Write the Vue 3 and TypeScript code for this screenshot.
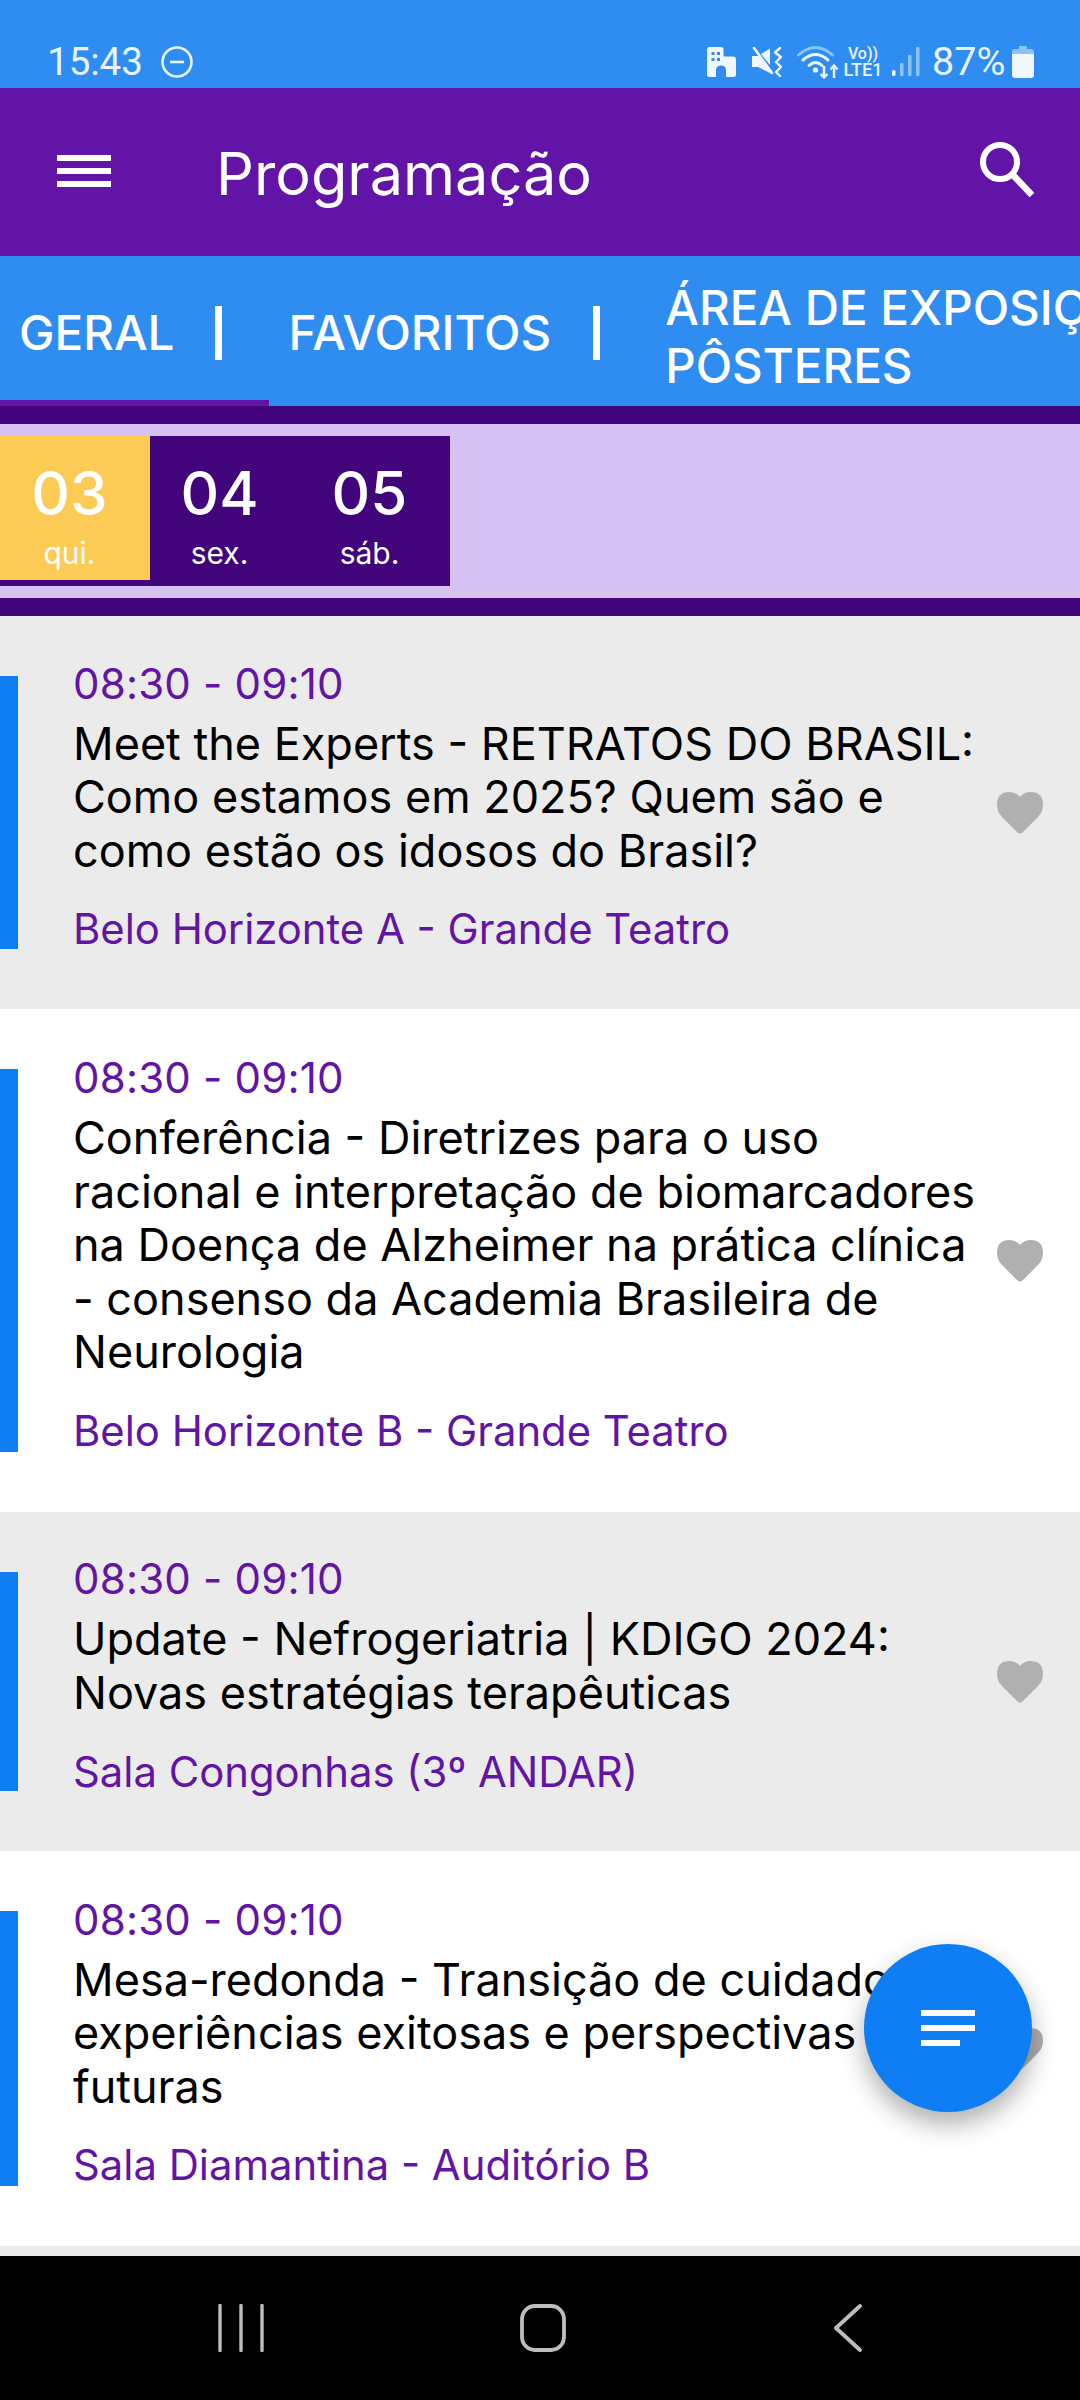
<script setup lang="ts">
import { ref } from 'vue'

interface Session {
  time: string
  title: string
  room: string
  tall: number
}

const days = [
  { num: '03', label: 'qui.' },
  { num: '04', label: 'sex.' },
  { num: '05', label: 'sáb.' }
]

const activeDay = ref(0)

const sessions: Session[] = [
  {
    time: '08:30 - 09:10',
    title: 'Meet the Experts - RETRATOS DO BRASIL: Como estamos em 2025? Quem são e como estão os idosos do Brasil?',
    room: 'Belo Horizonte A - Grande Teatro',
    tall: 393
  },
  {
    time: '08:30 - 09:10',
    title: 'Conferência - Diretrizes para o uso racional e interpretação de biomarcadores na Doença de Alzheimer na prática clínica - consenso da Academia Brasileira de Neurologia',
    room: 'Belo Horizonte B - Grande Teatro',
    tall: 503
  },
  {
    time: '08:30 - 09:10',
    title: 'Update - Nefrogeriatria | KDIGO 2024: Novas estratégias terapêuticas',
    room: 'Sala Congonhas (3º ANDAR)',
    tall: 339
  },
  {
    time: '08:30 - 09:10',
    title: 'Mesa-redonda - Transição de cuidados: experiências exitosas e perspectivas futuras',
    room: 'Sala Diamantina - Auditório B',
    tall: 395
  }
]
</script>

<template>
  <div class="screen">
    <div class="status">
      <div class="status-left">
        <span class="clock">15:43</span>
        <svg class="dnd" viewBox="0 0 32 32" width="32" height="32">
          <circle cx="16" cy="16" r="14.5" fill="none" stroke="#e8f4ff" stroke-width="2.6" />
          <rect x="9" y="14.7" width="14" height="2.6" fill="#e8f4ff" />
        </svg>
      </div>
      <div class="status-right">
        <svg viewBox="0 0 30 30" width="30" height="30">
          <path fill="#f0f7ff" d="M1 2.500Q1 0 3.500 0H15Q17.500 0 17.500 2.500V9.500H27Q30 9.500 30 12.500V27.500Q30 30 27.500 30H20V23Q20 18.500 15 18.500Q10 18.500 10 23V30H3.500Q1 30 1 27.500Z" />
          <g fill="#2f8df2">
            <rect x="5.500" y="5" width="3" height="3" /><rect x="11" y="5" width="3" height="3" />
            <rect x="5.500" y="11" width="3" height="3" /><rect x="11" y="11" width="3" height="3" />
          </g>
        </svg>
        <svg class="gap-mute" viewBox="0 0 30 30" width="30" height="30">
          <path fill="#f0f7ff" d="M0 9H5L8 9.500L20 24V27L6 20H0Z" />
          <path fill="#f0f7ff" d="M9 7L18 1.500V18Z" />
          <path stroke="#f0f7ff" stroke-width="2.600" fill="none" stroke-linecap="round" d="M2 1L20 26" />
          <path stroke="#f0f7ff" stroke-width="2.400" fill="none" stroke-linecap="round" stroke-linejoin="round" d="M28 1L23 5.500L29 10L24 15L29 20L24 25L28 29" />
        </svg>
        <svg class="gap-wifi" viewBox="0 0 42 34" width="42" height="34">
          <path stroke="#8cc2f8" stroke-width="3" fill="none" stroke-linecap="round" d="M1.500 10Q18.500 -5 35.500 10" />
          <path stroke="#f0f7ff" stroke-width="3" fill="none" stroke-linecap="round" d="M6 15Q18.500 4 31 15" />
          <path stroke="#f0f7ff" stroke-width="3" fill="none" stroke-linecap="round" d="M12 20.500Q18.500 14.500 25 20.500" />
          <circle cx="18.500" cy="25" r="2.600" fill="#f0f7ff" />
          <path stroke="#f0f7ff" stroke-width="2.400" fill="none" d="M27 21V33M23.500 29L27 32.500L30.500 29M37 33V20.500M33.500 24.500L37 20.500L40.500 24.500" />
        </svg>
        <div class="volte">
          <span>Vo))</span>
          <span>LTE1</span>
        </div>
        <svg class="gap-signal" viewBox="0 0 28 30" width="28" height="30">
          <rect x="0" y="23" width="3.500" height="6" rx="1.500" fill="#f0f7ff" />
          <rect x="8" y="16" width="3.500" height="13" rx="1" fill="#8cc2f8" />
          <rect x="16" y="8" width="3.500" height="21" rx="1" fill="#8cc2f8" />
          <rect x="24" y="0" width="3.500" height="29" rx="1" fill="#8cc2f8" />
        </svg>
        <span class="pct">87%</span>
        <svg class="gap-batt" viewBox="0 0 22 32" width="22" height="32">
          <path fill="#8cc2f8" d="M7 1Q7 0 8 0H14Q15 0 15 1V3H19Q22 3 22 6V12H0V6Q0 3 3 3H7Z" />
          <path fill="#f0f7ff" d="M0 8H22V29Q22 32 19 32H3Q0 32 0 29Z" />
        </svg>
      </div>
    </div>

    <header class="appbar">
      <button class="icon-btn menu" aria-label="Menu">
        <span></span><span></span><span></span>
      </button>
      <h1>Programação</h1>
      <svg class="search" viewBox="0 0 54 56" width="54" height="56">
        <circle cx="20" cy="20" r="17" fill="none" stroke="#fff" stroke-width="6" />
        <path d="M32 32L52 53" stroke="#fff" stroke-width="6.500" fill="none" />
      </svg>
    </header>

    <nav class="tabs">
      <div class="tab tab-first active">GERAL<i class="sep"></i></div>
      <div class="tab tab-second">FAVORITOS<i class="sep"></i></div>
      <div class="tab tab-third">ÁREA DE EXPOSIÇÃO<br />PÔSTERES</div>
    </nav>

    <div class="daybar">
      <div class="days">
        <div
          v-for="(d, i) in days"
          :key="d.num"
          class="day"
          :class="{ current: i === activeDay }"
        >
          <strong>{{ d.num }}</strong>
          <small>{{ d.label }}</small>
        </div>
      </div>
    </div>

    <section class="list">
      <article
        v-for="(s, i) in sessions"
        :key="i"
        class="session"
        :class="{ shaded: i % 2 === 0 }"
        :style="{ height: s.tall + 'px' }"
      >
        <div class="mark"></div>
        <div class="body">
          <div class="time">{{ s.time }}</div>
          <div class="title">{{ s.title }}</div>
          <div class="room">{{ s.room }}</div>
        </div>
        <svg class="heart" viewBox="0 0 46 42" width="46" height="42">
          <path fill="#b0b0b0" d="M23 41.500Q21.500 41.500 20 40L5 25Q0 20 0 13Q0 0 12.500 0Q19 0 23 5Q27 0 33.500 0Q46 0 46 13Q46 20 41 25L26 40Q24.500 41.500 23 41.500Z" />
        </svg>
      </article>
    </section>

    <div class="navbar">
      <svg viewBox="0 0 46 48" width="46" height="48">
        <path d="M2 1.500V46.500M23 1.500V46.500M44 1.500V46.500" stroke="#bdbdbd" stroke-width="3.400" stroke-linecap="round" fill="none" />
      </svg>
      <svg class="nav-home" viewBox="0 0 46 48" width="46" height="48">
        <rect x="2" y="2" width="42" height="44" rx="13" fill="none" stroke="#bdbdbd" stroke-width="3.800" />
      </svg>
      <svg class="nav-back" viewBox="0 0 28 48" width="28" height="48">
        <path d="M26 2L2 24L26 46" stroke="#bdbdbd" stroke-width="3.800" stroke-linecap="round" stroke-linejoin="round" fill="none" />
      </svg>
    </div>

    <button class="fab" aria-label="Filtrar">
      <span></span><span></span><span class="short"></span>
    </button>
  </div>
</template>

<style>
html, body {
  margin: 0;
  background: #000;
}
</style>

<style scoped>
.screen {
  position: relative;
  width: 1080px;
  height: 2400px;
  overflow: hidden;
  display: flex;
  flex-direction: column;
  font-family: Inter, "Liberation Sans", sans-serif;
  background: #ebebeb;
}

.status {
  height: 88px;
  flex-shrink: 0;
  background: #2f8df2;
  display: flex;
  justify-content: space-between;
  align-items: flex-end;
  padding: 0 46px 9px 47px;
  box-sizing: border-box;
  color: #e8f4ff;
}

.status-left,
.status-right {
  display: flex;
  align-items: center;
}

.clock {
  font-family: Roboto, sans-serif;
  font-size: 38.500px;
  line-height: 34px;
}

.dnd {
  margin-left: 18px;
}

.status-right svg {
  display: block;
}

.gap-mute { margin-left: 16px; }
.gap-wifi { margin-left: 15px; }
.gap-signal { margin-left: 9px; }
.gap-batt { margin-left: 7px; }

.volte {
  display: flex;
  flex-direction: column;
  margin-left: 4px;
  font-family: Roboto, sans-serif;
  font-size: 16px;
  font-weight: 500;
  line-height: 16px;
  text-align: center;
  width: 40px;
}

.volte span:last-child {
  font-size: 18px;
  line-height: 16px;
}

.pct {
  font-family: Roboto, sans-serif;
  font-size: 39.500px;
  line-height: 34px;
  margin-left: 12px;
  width: 73px;
}

.appbar {
  height: 168px;
  flex-shrink: 0;
  background: #6214a6;
  display: flex;
  align-items: center;
  padding: 0 46px 0 57px;
  box-sizing: border-box;
  color: #fff;
}

.icon-btn {
  background: none;
  border: 0;
  padding: 0;
}

.menu {
  width: 54px;
  display: flex;
  flex-direction: column;
  gap: 7px;
  margin-top: -3px;
}

.menu span {
  display: block;
  height: 6px;
  background: #fff;
}

.appbar h1 {
  margin: 0 0 0 105px;
  flex: 1;
  font-size: 59.400px;
  font-weight: 400;
  line-height: 68px;
  padding-top: 2px;
}

.search {
  margin-top: -4px;
}

.tabs {
  height: 150px;
  flex-shrink: 0;
  background: #2f8df2;
  display: flex;
  align-items: center;
  overflow: hidden;
  white-space: nowrap;
  color: #fff;
  font-size: 47.500px;
  font-weight: 500;
  line-height: 58px;
  position: relative;
  padding-top: 3px;
  box-sizing: border-box;
}

.tab {
  flex-shrink: 0;
  display: flex;
  align-items: center;
}

.tab-first {
  padding-left: 19px;
}

.tab-first .sep {
  margin-left: 41px;
}

.tab-second {
  padding-left: 66px;
}

.tab-second .sep {
  margin-left: 42px;
}

.tab-third {
  display: block;
  padding-left: 65px;
  padding-top: 9px;
}

.sep {
  display: block;
  width: 7px;
  height: 54px;
  background: #fff;
}

.active::after {
  content: "";
  position: absolute;
  left: 0;
  bottom: 0;
  width: 269px;
  height: 6px;
  background: #6214a6;
}

.daybar {
  flex-shrink: 0;
  height: 210px;
  box-sizing: border-box;
  background: #d5c2f2;
  border-top: 18px solid #41047a;
  border-bottom: 18px solid #41047a;
  padding: 12px 0;
}

.days {
  display: inline-flex;
  height: 150px;
  background: #41047a;
}

.day {
  width: 150px;
  height: 144px;
  padding-right: 11px;
  box-sizing: border-box;
  display: flex;
  flex-direction: column;
  align-items: center;
  color: #fff;
}

.day.current {
  background: #fbcb55;
}

.day strong {
  font-size: 60px;
  font-weight: 550;
  line-height: 74px;
  margin-top: 20px;
}

.day small {
  font-size: 30px;
  line-height: 36px;
  margin-top: 5px;
}

.list {
  flex: 1;
  min-height: 0;
  overflow: hidden;
}

.session {
  display: flex;
  align-items: center;
  background: #fff;
  box-sizing: border-box;
}

.session.shaded {
  background: #ebebeb;
}

.mark {
  width: 18px;
  align-self: stretch;
  margin: 60px 0;
  background: #0f7ef5;
  flex-shrink: 0;
}

.body {
  flex: 1;
  min-width: 0;
  padding: 0 8px 14px 55px;
}

.time {
  color: #6214a6;
  font-size: 42px;
  line-height: 50px;
  letter-spacing: 0.200px;
}

.title {
  color: #000;
  font-size: 45px;
  line-height: 53.600px;
  font-weight: 400;
  margin-top: 8px;
}

.room {
  color: #6214a6;
  font-size: 41.800px;
  line-height: 46px;
  margin-top: 29px;
}

.heart {
  flex-shrink: 0;
  margin-right: 37px;
}

.navbar {
  height: 144px;
  flex-shrink: 0;
  background: #000;
  display: flex;
  align-items: center;
  padding: 0 0 0 218px;
  box-sizing: border-box;
}

.nav-home {
  margin-left: 256px;
}

.nav-back {
  margin-left: 268px;
}

.fab {
  position: absolute;
  left: 864px;
  top: 1944px;
  width: 168px;
  height: 168px;
  border: 0;
  border-radius: 50%;
  background: #0f7ef5;
  box-shadow: 0 12px 26px rgba(0, 0, 0, 0.32);
  display: flex;
  flex-direction: column;
  justify-content: center;
  align-items: flex-start;
  gap: 9px;
  padding: 0 0 0 57px;
  box-sizing: border-box;
}

.fab span {
  display: block;
  width: 54px;
  height: 6px;
  background: #fff;
}

.fab .short {
  width: 39px;
}
</style>
